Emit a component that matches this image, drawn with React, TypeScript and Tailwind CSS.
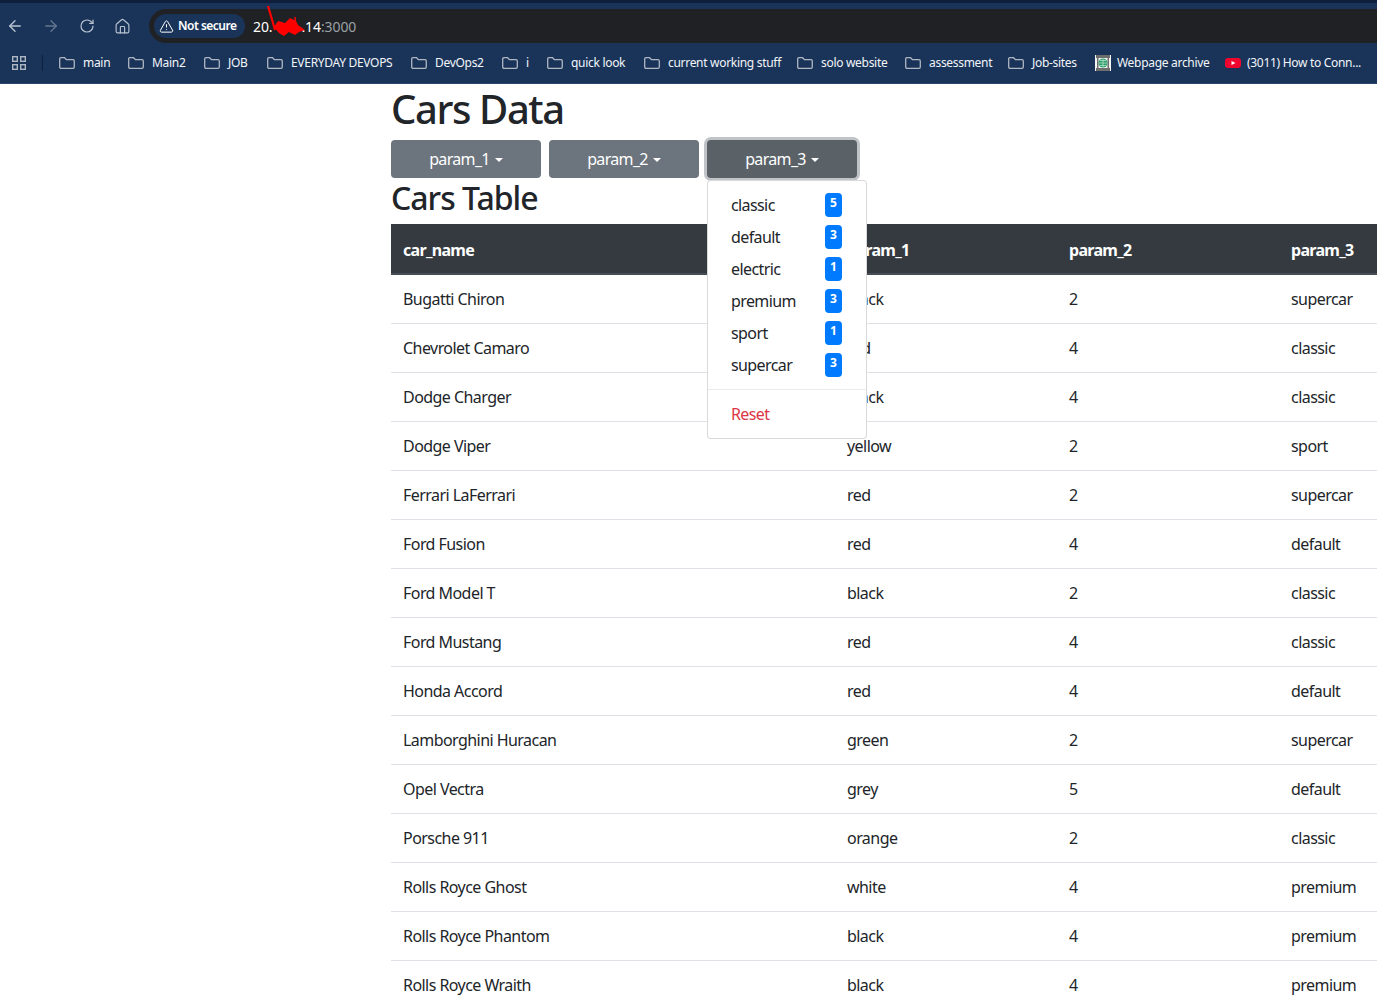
import { ArrowLeft, ArrowRight, RotateCw, House, TriangleAlert } from "lucide-react";

const F = "font-['Noto_Sans',sans-serif]";

const marks = [
  { t: "main", w: "w-[69px]" },
  { t: "Main2", w: "w-[76px]" },
  { t: "JOB", w: "w-[63px]" },
  { t: "EVERYDAY DEVOPS", w: "w-[144px]" },
  { t: "DevOps2", w: "w-[91px]" },
  { t: "i", w: "w-[45px]" },
  { t: "quick look", w: "w-[97px]" },
  { t: "current working stuff", w: "w-[153px]" },
  { t: "solo website", w: "w-[108px]" },
  { t: "assessment", w: "w-[103px]" },
  { t: "Job-sites", w: "w-[87px]" },
];

const rows = [
  ["Bugatti Chiron", "black", "2", "supercar"],
  ["Chevrolet Camaro", "red", "4", "classic"],
  ["Dodge Charger", "black", "4", "classic"],
  ["Dodge Viper", "yellow", "2", "sport"],
  ["Ferrari LaFerrari", "red", "2", "supercar"],
  ["Ford Fusion", "red", "4", "default"],
  ["Ford Model T", "black", "2", "classic"],
  ["Ford Mustang", "red", "4", "classic"],
  ["Honda Accord", "red", "4", "default"],
  ["Lamborghini Huracan", "green", "2", "supercar"],
  ["Opel Vectra", "grey", "5", "default"],
  ["Porsche 911", "orange", "2", "classic"],
  ["Rolls Royce Ghost", "white", "4", "premium"],
  ["Rolls Royce Phantom", "black", "4", "premium"],
  ["Rolls Royce Wraith", "black", "4", "premium"],
];

const menu = [
  ["classic", "5"],
  ["default", "3"],
  ["electric", "1"],
  ["premium", "3"],
  ["sport", "1"],
  ["supercar", "3"],
];

function FolderIcon() {
  return (
    <svg width="16" height="12" viewBox="0 0 16 12" fill="none" stroke="#aeb6c1" strokeWidth="1.3" className="shrink-0 mr-[8px]">
      <path d="M0.7 2 Q0.7 0.7 2 0.7 H5.6 L7.4 2.6 H14 Q15.3 2.6 15.3 3.9 V10 Q15.3 11.3 14 11.3 H2 Q0.7 11.3 0.7 10 Z" />
    </svg>
  );
}

function FolderMark({ t, w }: { t: string; w: string }) {
  return (
    <div className={`flex items-center shrink-0 ${w}`}>
      <FolderIcon />
      <span className="text-[12px] tracking-[-0.3px] text-[#f2f5f9] whitespace-nowrap">{t}</span>
    </div>
  );
}

function Caret() {
  return <span className="inline-block ml-[5px] align-[3px] border-x-[4.5px] border-t-[4.5px] border-x-transparent border-t-white" />;
}

function Btn({ t, active }: { t: string; active?: boolean }) {
  return (
    <button
      className={`w-[150px] h-[38px] rounded text-white text-[16px] tracking-[-0.65px] text-center shrink-0 ${
        active ? "bg-[#5a6268] ring-[3px] ring-[#828a91]/50" : "bg-[#6c757d]"
      }`}
    >
      {t}
      <Caret />
    </button>
  );
}

export default function App() {
  return (
    <div className={`relative h-[1001px] w-[1377px] overflow-hidden bg-white text-[#212529] ${F}`}>
      {/* browser chrome */}
      <div className="h-[3px] bg-[#0e1f3c]" />
      <div className="relative flex h-[40px] bg-[#1a3459]">
        <div className="flex items-center pl-[6px] w-[149px] shrink-0 pt-[6px]">
          <ArrowLeft size={18} strokeWidth={1.8} className="text-[#b9c3d1]" />
          <ArrowRight size={18} strokeWidth={1.8} className="text-[#64768f] ml-[18px]" />
          <RotateCw size={16} strokeWidth={1.8} className="text-[#b9c3d1] ml-[19px]" />
          <House size={17} strokeWidth={1.6} className="text-[#b9c3d1] ml-[19px]" />
        </div>
        <div className="flex-1 mt-[6px] h-[34px] bg-[#202124] rounded-l-[17px] flex items-center pl-[5px]">
          <div className="flex items-center h-[24px] w-[91px] rounded-full bg-[#1a3459] pl-[5px] shrink-0">
            <TriangleAlert size={15} strokeWidth={1.6} className="text-white shrink-0" />
            <span className="ml-[4px] text-[12px] font-semibold tracking-[-0.5px] text-white whitespace-nowrap">Not secure</span>
          </div>
          <span className="ml-[8px] text-[14px] tracking-[-0.1px] text-white">
            20.<span className="ml-[29px]">.14</span>
            <span className="text-[#9aa0a6]">:3000</span>
          </span>
        </div>
        <svg className="absolute left-[265px] top-[0px]" width="45" height="36" viewBox="0 0 45 36">
          <path d="M3 3 L8 20 L10 27" stroke="#f00" strokeWidth="2.2" fill="none" />
          <path d="M9 24 L13 18 L20 20 L25 15 L31 18 L33 22 L40 27 L34 29 L30 32 L24 29 L19 33 L14 30 Z" fill="#f00" />
          <path d="M30 14 L31 26" stroke="#f00" strokeWidth="1.5" />
        </svg>
      </div>
      <div className="flex items-center h-[41px] bg-[#1a3459] border-b border-[#2d4568] pl-[12px]">
        <svg width="14" height="14" viewBox="0 0 14 14" fill="none" stroke="#aeb6c1" strokeWidth="1.4" className="shrink-0">
          <rect x="0.7" y="0.7" width="4.6" height="4.6" />
          <rect x="8.7" y="0.7" width="4.6" height="4.6" />
          <rect x="0.7" y="8.7" width="4.6" height="4.6" />
          <rect x="8.7" y="8.7" width="4.6" height="4.6" />
        </svg>
        <div className="w-px h-[16px] bg-[#0e1f3c] ml-[16px] mr-[16px] shrink-0" />
        {marks.map((m) => (
          <FolderMark key={m.t} t={m.t} w={m.w} />
        ))}
        <div className="flex items-center w-[130px] shrink-0">
          <svg width="16" height="16" viewBox="0 0 16 16" className="shrink-0 mr-[6px]">
            <rect width="16" height="16" fill="#f4f4f4" />
            <rect x="1" y="0" width="14" height="3" fill="#6d6d6d" />
            <rect x="2" y="3" width="1.5" height="10" fill="#6d6d6d" />
            <rect x="12.5" y="3" width="1.5" height="10" fill="#6d6d6d" />
            <rect x="1" y="13" width="14" height="3" fill="#6d6d6d" />
            <circle cx="8" cy="8" r="4.5" fill="#2e9e6b" />
            <path d="M4 8 H12 M8 4 V12 M5 5.5 H11 M5 10.5 H11" stroke="#bfe6d4" strokeWidth="0.7" />
          </svg>
          <span className="text-[12px] tracking-[-0.3px] text-[#f2f5f9] whitespace-nowrap">Webpage archive</span>
        </div>
        <div className="flex items-center shrink-0">
          <svg width="16" height="16" viewBox="0 0 16 16" className="shrink-0 mr-[6px]">
            <rect x="0" y="3" width="16" height="10" rx="3" fill="#f0052f" />
            <path d="M6.5 6 L10.5 8 L6.5 10 Z" fill="#fff" />
          </svg>
          <span className="text-[12px] tracking-[-0.3px] text-[#f2f5f9] whitespace-nowrap">(3011) How to Conn...</span>
        </div>
      </div>

      {/* page */}
      <div className="ml-[391px] w-[1110px]">
        <h1 className="pt-[2px] text-[40px] leading-[46px] font-medium tracking-[-1.4px] mb-[8px]">Cars Data</h1>
        <div className="flex gap-[8px]">
          <Btn t="param_1" />
          <Btn t="param_2" />
          <Btn t="param_3" active />
        </div>
        <h2 className="pt-[1px] text-[32px] leading-[37px] font-medium tracking-[-1px] mb-[8px]">Cars Table</h2>
        <table className="w-[1110px] table-fixed border-collapse text-[16px] tracking-[-0.55px]">
          <colgroup>
            <col className="w-[444px]" />
            <col className="w-[222px]" />
            <col className="w-[222px]" />
            <col className="w-[222px]" />
          </colgroup>
          <thead>
            <tr className="h-[50px] bg-[#343a40] text-white border-b-2 border-[#454d55]">
              {["car_name", "param_1", "param_2", "param_3"].map((h) => (
                <th key={h} className="px-[12px] pt-[2px] text-left font-bold tracking-[-0.7px]">{h}</th>
              ))}
            </tr>
          </thead>
          <tbody>
            {rows.map((r) => (
              <tr key={r[0]} className="h-[49px] border-b border-[#dee2e6]">
                {r.map((c, i) => (
                  <td key={i} className="px-[12px]">{c}</td>
                ))}
              </tr>
            ))}
          </tbody>
        </table>
      </div>

      {/* dropdown */}
      <div className="absolute left-[707px] top-[180px] w-[160px] h-[259px] bg-white border border-black/15 rounded py-[8px] text-[16px] tracking-[-0.6px]">
        {menu.map(([t, n]) => (
          <div key={t} className="flex h-[32px] items-center pl-[23px] pr-[24px] justify-between">
            <span>{t}</span>
            <span className="w-[17px] h-[24px] bg-[#007bff] rounded text-white text-[12px] font-bold text-center leading-[20px] tracking-normal">{n}</span>
          </div>
        ))}
        <div className="my-[8px] border-t border-[#e9ecef]" />
        <div className="h-[32px] flex items-center pl-[23px] text-[#dc3545]">Reset</div>
      </div>
    </div>
  );
}
